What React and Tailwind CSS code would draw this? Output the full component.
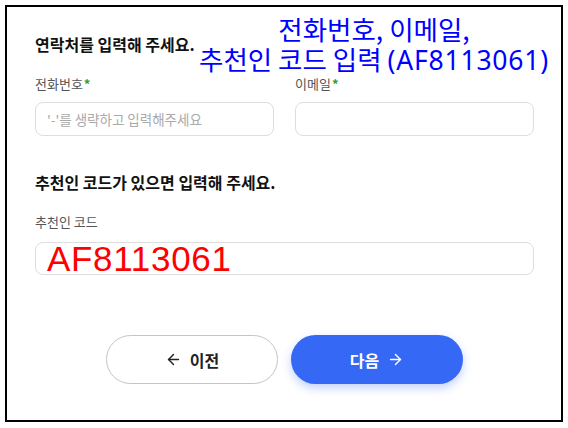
import React from 'react';
import { ArrowLeft, ArrowRight } from 'lucide-react';

const kr = { fontFamily: '"Noto Sans CJK KR", "Noto Sans", sans-serif' };

function Label({ children, required }) {
  return (
    <div className="text-[13px] leading-[16px] text-[#555]">
      {children}
      {required && <span className="ml-[1px] font-bold text-[#2e9e3a]">*</span>}
    </div>
  );
}

export default function App() {
  return (
    <div className="w-[568px] h-[428px] bg-white p-[5px]" style={kr}>
      <div className="relative w-[558px] h-[417px] border-2 border-black pl-[28px] pr-[27px]">
        <h2 className="mt-[27px] text-[16px] leading-[20px] font-bold text-[#111]">
          연락처를 입력해 주세요.
        </h2>

        <div className="grid grid-cols-2 gap-x-[21px] mt-[22px]">
          <div>
            <Label required>전화번호</Label>
            <div className="mt-[10px] h-[34px] rounded-[8px] border border-[#dedede] px-[11px] flex items-center text-[13.5px] text-[#aaa]">
              '-'를 생략하고 입력해주세요
            </div>
          </div>
          <div>
            <Label required>이메일</Label>
            <div className="mt-[10px] h-[34px] rounded-[8px] border border-[#dedede]" />
          </div>
        </div>

        <h2 className="mt-[36px] text-[16px] leading-[20px] font-bold text-[#111]">
          추천인 코드가 있으면 입력해 주세요.
        </h2>

        <div className="mt-[22px]">
          <Label>추천인 코드</Label>
          <div className="mt-[12px] h-[33px] rounded-[8px] border border-[#dedede] px-[11px] flex items-center">
            <span
              className="text-[35px] leading-[34px] tracking-[0.02em] text-[#ff0000]"
              style={{ fontFamily: '"Liberation Sans", Arial, sans-serif' }}
            >
              AF8113061
            </span>
          </div>
        </div>

        <div className="mt-[60px] flex justify-center gap-[13px]">
          <button className="w-[172px] h-[49px] rounded-full border border-[#c4c4c4] bg-white flex items-center justify-center gap-[8px] text-[16px] font-bold text-[#222]">
            <ArrowLeft size={17} strokeWidth={2} />
            이전
          </button>
          <button className="w-[172px] h-[49px] rounded-full bg-[#3568f5] shadow-[0_4px_10px_rgba(53,104,245,0.3)] flex items-center justify-center gap-[8px] text-[16px] font-bold text-white">
            다음
            <ArrowRight size={17} strokeWidth={2} />
          </button>
        </div>

        <div className="absolute top-[7px] left-[180px] w-[374px] text-center text-[26.5px] leading-[30px] text-[#0000ff]">
          <div>전화번호, 이메일,</div>
          <div className="whitespace-nowrap">
            추천인 코드 입력{' '}
            <span className="tracking-[0.03em]" style={{ fontFamily: '"Noto Sans", sans-serif' }}>
              (AF8113061)
            </span>
          </div>
        </div>
      </div>
    </div>
  );
}
